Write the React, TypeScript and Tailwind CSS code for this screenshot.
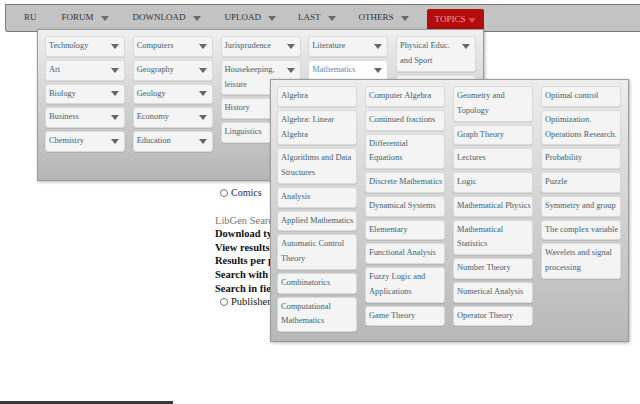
import React from "react";

const serif = "font-['Liberation_Serif','Times_New_Roman',serif]";

const topics: { label: string; active?: boolean }[][] = [
  [{ label: "Technology" }, { label: "Art" }, { label: "Biology" }, { label: "Business" }, { label: "Chemistry" }],
  [{ label: "Computers" }, { label: "Geography" }, { label: "Geology" }, { label: "Economy" }, { label: "Education" }],
  [{ label: "Jurisprudence" }, { label: "Housekeeping,\nleisure" }, { label: "History" }, { label: "Linguistics" }],
  [{ label: "Literature" }, { label: "Mathematics", active: true }],
  [{ label: "Physical Educ.\nand Sport" }, { label: "" }],
];

const maths: string[][] = [
  [
    "Algebra",
    "Algebra: Linear\nAlgebra",
    "Algorithms and Data\nStructures",
    "Analysis",
    "Applied Mathematics",
    "Automatic Control\nTheory",
    "Combinatorics",
    "Computational\nMathematics",
  ],
  [
    "Computer Algebra",
    "Continued fractions",
    "Differential\nEquations",
    "Discrete Mathematics",
    "Dynamical Systems",
    "Elementary",
    "Functional Analysis",
    "Fuzzy Logic and\nApplications",
    "Game Theory",
  ],
  [
    "Geometry and\nTopology",
    "Graph Theory",
    "Lectures",
    "Logic",
    "Mathematical Physics",
    "Mathematical\nStatistics",
    "Number Theory",
    "Numerical Analysis",
    "Operator Theory",
  ],
  [
    "Optimal control",
    "Optimization.\nOperations Research.",
    "Probability",
    "Puzzle",
    "Symmetry and group",
    "The complex variable",
    "Wavelets and signal\nprocessing",
  ],
];

function Caret({ color = "border-t-[#666]" }: { color?: string }) {
  return <span className={`inline-block h-0 w-0 border-x-[4px] border-t-[5px] border-x-transparent ${color}`} />;
}

function TopicItem({ label, active }: { label: string; active?: boolean }) {
  return (
    <div
      className={`flex min-h-[20.75px] w-[80px] items-start justify-between rounded-[3px] border border-[#dadada] px-[3px] py-[2px] pr-[5px] text-[8.4px] leading-[14.75px] whitespace-pre shadow-[0_1px_1px_rgba(0,0,0,0.08)] ${
        active ? "bg-white text-[#3f8fc4]" : "bg-[#f4f4f4] text-[#3d6270]"
      }`}
    >
      <span>{label}</span>
      {label && (
        <span className="flex h-[14.75px] items-center">
          <Caret />
        </span>
      )}
    </div>
  );
}

function MathItem({ label }: { label: string }) {
  return (
    <div className="w-[80px] rounded-[3px] border border-[#dadada] bg-[#f4f4f4] px-[3px] py-[2px] text-[8.4px] leading-[14.75px] whitespace-pre text-[#3d6270] shadow-[0_1px_1px_rgba(0,0,0,0.08)]">
      {label}
    </div>
  );
}

function Radio() {
  return <span className="inline-block h-[8px] w-[8px] shrink-0 rounded-full border border-[#777] bg-white" />;
}

function NavItem({ label, className }: { label: string; className: string }) {
  return (
    <div className={`flex items-center ${className}`}>
      <span>{label}</span>
      <span className="ml-[7px] flex items-center">
        <Caret color="border-t-[#6a6a6a]" />
      </span>
    </div>
  );
}

export default function App() {
  return (
    <div className={`relative flex h-[404px] w-[640px] flex-col overflow-hidden bg-white ${serif}`}>
      <nav className="mt-[4px] ml-[5px] flex h-[28px] items-center rounded-bl-[3px] border border-r-0 border-[#7b7b7b] bg-[#c3c3c3] pl-[18px] text-[9px] text-[#333]">
        <span>RU</span>
        <NavItem label="FORUM" className="ml-[25px]" />
        <NavItem label="DOWNLOAD" className="ml-[24px]" />
        <NavItem label="UPLOAD" className="ml-[24px]" />
        <NavItem label="LAST" className="ml-[22px]" />
        <NavItem label="OTHERS" className="ml-[23px]" />
        <div className="mt-auto ml-[18px] flex h-[22px] items-center rounded-t-[2px] bg-[#b30c0c] px-[8px] text-[#f2a2a2]">
          <span>TOPICS</span>
          <span className="ml-[3px] flex items-center">
            <Caret color="border-t-[#e04848]" />
          </span>
        </div>
      </nav>

      <div className="mt-[154px] pl-[215px] text-[10.5px] leading-[13.6px] text-[#111]">
        <div className="flex items-center gap-[3px] pl-[5px] text-[10px] text-[#23237e]">
          <Radio />
          <span>Comics</span>
        </div>
        <div className="mt-[14px] w-[55px] overflow-hidden whitespace-nowrap">
          <div className="text-[#777]">LibGen Search options</div>
          <div className="font-bold">Download type:</div>
          <div className="font-bold">View results:</div>
          <div className="font-bold">Results per page:</div>
          <div className="font-bold">Search with mask:</div>
          <div className="font-bold">Search in fields:</div>
          <div className="flex items-center gap-[3px] pl-[5px]">
            <Radio />
            <span>Publisher</span>
          </div>
        </div>
      </div>

      <div className="mt-auto h-[3px] w-[173px] bg-[#383838]" />

      <div className="absolute top-[29px] left-[37px] h-[152px] w-[447px] border border-[#9a9a9a] bg-gradient-to-b from-[#efefef] to-[#b5b5b5] pt-[6px] pl-[7px] shadow-[1px_1px_3px_rgba(0,0,0,0.3)]">
        <div className="flex gap-[7.75px]">
          {topics.map((col, i) => (
            <div key={i} className="flex flex-col gap-[3px]">
              {col.map((t, j) => (
                <TopicItem key={j} label={t.label} active={t.active} />
              ))}
            </div>
          ))}
        </div>
      </div>

      <div className="absolute top-[79px] left-[270px] w-[359px] border border-[#9a9a9a] bg-gradient-to-b from-[#ededed] to-[#b8b8b8] pt-[6px] pb-[9px] pl-[6px] shadow-[1px_1px_3px_rgba(0,0,0,0.3)]">
        <div className="flex items-start gap-[8px]">
          {maths.map((col, i) => (
            <div key={i} className="flex flex-col gap-[3px]">
              {col.map((m) => (
                <MathItem key={m} label={m} />
              ))}
            </div>
          ))}
        </div>
      </div>
    </div>
  );
}
